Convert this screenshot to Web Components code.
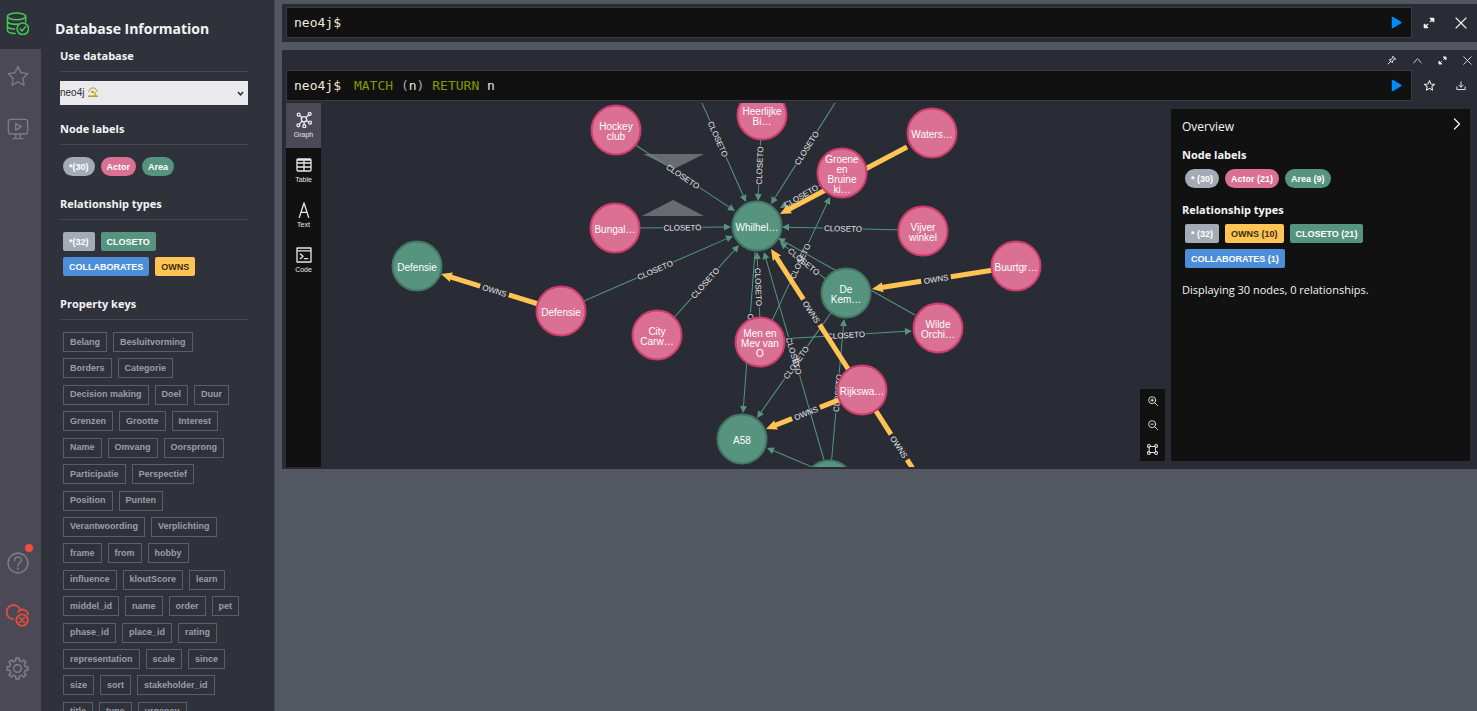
<!DOCTYPE html>
<html lang="en">
<head>
<meta charset="utf-8">
<title>neo4j browser</title>
<style>
  body {
    margin: 0;
    height: 100vh;
    overflow: hidden;
    background: #535762;
    color: #f4f4f6;
    font-family: "Open Sans", "Noto Sans", sans-serif;
    font-size: 11px;
    --color-rail: #4b4955;
    --color-drawer: #30323b;
    --color-frame: #292c34;
    --color-dark: #111111;
    --font-ui: "Liberation Sans", Arial, sans-serif;
    --font-mono: "DejaVu Sans Mono", "Liberation Mono", monospace;
  }
</style>
</head>
<body>
<browser-app>
  <side-rail slot="rail"></side-rail>

  <info-drawer slot="drawer" heading="Database Information">
    <drawer-section heading="Use database">
      <database-select></database-select>
    </drawer-section>
    <drawer-section heading="Node labels">
      <chip-list>
        <label-chip round>*(30)</label-chip>
        <label-chip round color="pink">Actor</label-chip>
        <label-chip round color="green">Area</label-chip>
      </chip-list>
    </drawer-section>
    <drawer-section heading="Relationship types">
      <chip-list>
        <label-chip>*(32)</label-chip>
        <label-chip color="green">CLOSETO</label-chip>
        <label-chip color="blue">COLLABORATES</label-chip>
        <label-chip color="orange">OWNS</label-chip>
      </chip-list>
    </drawer-section>
    <drawer-section heading="Property keys">
      <property-keys></property-keys>
    </drawer-section>
  </info-drawer>

  <query-frame>
    <query-editor slot="editor" editable></query-editor>
    <icon-button slot="actions" icon="expand" label="Fullscreen" size="12"></icon-button>
    <icon-button slot="actions" icon="close" label="Close" size="12"></icon-button>
  </query-frame>

  <query-frame>
    <icon-button slot="header" icon="pin" label="Pin" size="10"></icon-button>
    <icon-button slot="header" icon="up" label="Collapse" size="9"></icon-button>
    <icon-button slot="header" icon="expand" label="Fullscreen" size="9"></icon-button>
    <icon-button slot="header" icon="close" label="Close" size="9"></icon-button>
    <query-editor slot="editor" query="MATCH (n) RETURN n"></query-editor>
    <icon-button slot="actions" icon="star" label="Favorite" size="11"></icon-button>
    <icon-button slot="actions" icon="download" label="Export" size="10"></icon-button>
    <result-view slot="result">
      <view-switch slot="views"></view-switch>
      <graph-canvas></graph-canvas>
      <overview-panel slot="panel" heading="Overview">
        <overview-group heading="Node labels">
          <label-chip round>* (30)</label-chip>
          <label-chip round color="pink">Actor (21)</label-chip>
          <label-chip round color="green">Area (9)</label-chip>
        </overview-group>
        <overview-group heading="Relationship types">
          <label-chip>* (32)</label-chip>
          <label-chip color="orange">OWNS (10)</label-chip>
          <label-chip color="green">CLOSETO (21)</label-chip>
          <label-chip color="blue">COLLABORATES (1)</label-chip>
        </overview-group>
        <span slot="summary">Displaying 30 nodes, 0 relationships.</span>
      </overview-panel>
    </result-view>
  </query-frame>
</browser-app>

<script>
// Eight-toothed cog outline in a 24x24 box
function gearPath() {
  const points = [];
  for (let i = 0; i < 8; i++) {
    const base = i * 45;
    [[-13, 8.4], [-9, 11], [9, 11], [13, 8.4]].forEach(([offset, radius]) => {
      const a = (base + offset) * Math.PI / 180;
      points.push(`${(12 + radius * Math.sin(a)).toFixed(2)} ${(12 - radius * Math.cos(a)).toFixed(2)}`);
    });
  }
  return `M${points.join('L')}z`;
}

// 24x24 line icons
const ICONS = {
  database: `<ellipse cx="11" cy="4.5" rx="9.5" ry="3.5"/><path d="M1.500 4.500v14.500c0 1.800 3.500 3.200 8 3.400M20.500 4.500v6M1.500 9.500c0 1.900 3.700 3.300 8.500 3.400 1.400 0 2-.100 3-.300M1.500 14.500c0 1.700 3.300 3 7.500 3.300"/><circle cx="17.500" cy="17.500" r="6"/><path d="M14.800 17.700l2 2 3.500-4.200"/>`,
  star: `<path d="M12 1.500l3.200 7 7.500.900-5.500 5.200 1.400 7.500L12 18.400l-6.600 3.700 1.400-7.500L1.300 9.400l7.500-.900z"/>`,
  guide: `<path d="M4 1.500h16a2.500 2.500 0 0 1 2.500 2.500v11a2.500 2.500 0 0 1-2.500 2.500H4A2.500 2.500 0 0 1 1.500 15V4A2.500 2.500 0 0 1 4 1.500zM9.500 5.800v7.400l6-3.700zM9.500 17.500V22M14.500 17.500V22M6.500 22.500h11"/>`,
  help: `<circle cx="12" cy="12" r="10.800"/><path d="M8.300 9.300c0-2.300 1.600-3.800 3.800-3.800s3.700 1.400 3.700 3.400c0 3-3.800 2.900-3.800 6"/><path d="M12 17.600v1.200"/>`,
  cloud: `<path d="M7.500 15.700A7.200 7.200 0 1 1 14.600 5.800M12.800 8.200c2-3.800 8.800-3.200 10.200 2.600"/><circle cx="16.800" cy="16.800" r="6"/><path d="M14.400 14.400l4.800 4.800M19.200 14.400l-4.800 4.800"/>`,
  gear: `<path d="${gearPath()}"/><circle cx="12" cy="12" r="4"/>`,
  expand: `<path d="M14.500 9.500l5-5M9.500 14.500l-5 5"/><path d="M14.500 2.500h7v7zM9.500 21.500h-7v-7z" fill="currentColor"/>`,
  close: `<path d="M2 2l20 20M22 2L2 22"/>`,
  up: `<path d="M2 18c4-2 6-8 10-11 4 3 6 9 10 11"/>`,
  pin: `<path d="M13.500 3l7.500 7.500M14.800 4.500L11 10l-5.500 1.500 7 7L14 13l5.500-3.800M9 15l-6.500 6.500"/>`,
  download: `<path d="M12 2v12M7 10l5 5 5-5M2 14v6.500h20V14"/>`,
  graph: `<circle cx="12" cy="11" r="4"/><circle cx="4" cy="4" r="2.200"/><circle cx="20.500" cy="3" r="2.200"/><circle cx="3.500" cy="20" r="2.200"/><circle cx="12.500" cy="21.200" r="2.200"/><circle cx="21" cy="16" r="2.200"/><path d="M5.700 5.500L9 8.300M18.800 4.600L15 8.200M5 18.200L9 14M12.200 15v4M19 15l-3.500-2"/>`,
  table: `<path d="M3 3h18a1.500 1.500 0 0 1 1.500 1.500v15A1.500 1.500 0 0 1 21 21H3a1.500 1.500 0 0 1-1.500-1.500v-15A1.500 1.500 0 0 1 3 3zM1.500 9h21M1.500 15h21M12 3v18M1.500 4.500h21"/>`,
  text: `<path d="M5 23L12 1.500 19 23M7.500 15.500h9"/>`,
  code: `<path d="M1.500 1.500h21v21h-21zM1.500 5.800h21M6.500 10.500l4 3.500-4 3.500M12.500 17.500h5"/>`,
  zoomIn: `<circle cx="10" cy="10" r="8.500"/><path d="M16.200 16.200L23 23M10 6.500v7M6.500 10h7"/>`,
  zoomOut: `<circle cx="10" cy="10" r="8.500"/><path d="M16.200 16.200L23 23M7 10h6"/>`,
  fit: `<path d="M5.500 5.500h13v13h-13zM1.500 6.500v-5h5l1.500 4M22.500 6.500v-5h-5l-1.500 4M1.500 17.500v5h5l1.500-4M22.500 17.500v5h-5l-1.500-4M1.500 6.500L5 8M22.500 6.500L19 8M1.500 17.500L5 16M22.500 17.500L19 16"/>`,
  right: `<path d="M7 2l10 10L7 22"/>`
};

function icon(name, size, stroke = 2) {
  return `<svg width="${size}" height="${size}" viewBox="0 0 24 24" fill="none" stroke="currentColor"
    stroke-width="${stroke}" stroke-linecap="round" stroke-linejoin="round" aria-hidden="true">${ICONS[name]}</svg>`;
}

const BUTTON_RESET = `
  button {
    margin: 0;
    padding: 0;
    border: 0;
    background: none;
    color: inherit;
    font: inherit;
    cursor: pointer;
  }
  svg { display: block; }
`;

class BaseElement extends HTMLElement {
  constructor() {
    super();
    this.attachShadow({ mode: 'open' });
  }

  connectedCallback() {
    this.shadowRoot.innerHTML = this.render();
  }
}

class BrowserApp extends BaseElement {
  render() {
    return `
      <style>
        :host { display: flex; height: 100vh; }
        main {
          flex: 1;
          min-width: 0;
          display: flex;
          flex-direction: column;
          gap: 8px;
          padding: 4px 0 0 7px;
        }
      </style>
      <slot name="rail"></slot>
      <slot name="drawer"></slot>
      <main><slot></slot></main>
    `;
  }
}

class SideRail extends BaseElement {
  render() {
    return `
      <style>
        ${BUTTON_RESET}
        :host {
          display: flex;
          flex-shrink: 0;
          width: 41px;
          background: var(--color-rail);
          color: #7d7b84;
        }
        nav {
          flex: 1;
          display: flex;
          flex-direction: column;
          padding-bottom: 16px;
        }
        button {
          display: grid;
          place-items: center;
          height: 53px;
          padding-right: 6px;
          position: relative;
        }
        .active {
          height: 49px;
          padding-bottom: 3px;
          box-sizing: border-box;
          background: var(--color-drawer);
          color: #43c854;
        }
        .spacer { flex: 1; }
        .error { color: #e54d3c; }
        .dot {
          position: absolute;
          top: 8px;
          right: 8px;
          width: 8px;
          height: 8px;
          border-radius: 50%;
          background: #f0503c;
        }
      </style>
      <nav>
        <button class="active" aria-label="Database">${icon('database', 23, 1.6)}</button>
        <button aria-label="Favorites">${icon('star', 22, 1.5)}</button>
        <button aria-label="Guides">${icon('guide', 22, 1.5)}</button>
        <div class="spacer"></div>
        <button aria-label="Help">${icon('help', 22, 1.7)}<span class="dot"></span></button>
        <button class="error" aria-label="Connection">${icon('cloud', 23, 1.9)}</button>
        <button aria-label="Settings">${icon('gear', 23, 1.7)}</button>
      </nav>
    `;
  }
}

class InfoDrawer extends BaseElement {
  render() {
    return `
      <style>
        :host {
          display: block;
          flex-shrink: 0;
          box-sizing: border-box;
          width: 234px;
          padding: 18px 26px 0 19px;
          border-right: 1px solid #42454f;
          background: var(--color-drawer);
          overflow: hidden;
        }
        h1 {
          margin: 0 0 7px -5px;
          font-size: 14px;
          line-height: 22px;
          font-weight: 700;
          white-space: nowrap;
        }
      </style>
      <h1>${this.getAttribute('heading')}</h1>
      <slot></slot>
    `;
  }
}

class DrawerSection extends BaseElement {
  render() {
    return `
      <style>
        :host { display: block; }
        h2 {
          margin: 0;
          padding-bottom: 6px;
          border-bottom: 1px solid #454852;
          font-size: 11px;
          line-height: 18px;
          font-weight: 700;
        }
      </style>
      <h2>${this.getAttribute('heading')}</h2>
      <slot></slot>
    `;
  }
}

class DatabaseSelect extends BaseElement {
  render() {
    return `
      <style>
        :host { display: block; padding: 9px 0 15px; }
        .box { position: relative; }
        select {
          display: block;
          width: 100%;
          height: 24px;
          padding: 0;
          border: 0;
          border-radius: 0;
          appearance: none;
          background: #e9e9ee;
          color: #2b2c33;
          font: 10px/24px var(--font-ui);
        }
        svg { position: absolute; pointer-events: none; }
        .home { left: 28px; top: 6px; }
        .arrow { right: 4px; top: 9px; }
      </style>
      <div class="box">
        <select aria-label="Use database"><option>neo4j</option><option>system</option></select>
        <svg class="home" width="10" height="10" viewBox="0 0 10 10">
          <path d="M1 4.500L5 .800 9 4.500V9H1z" fill="#f4ecc4"/>
          <path d="M.500 5L3 1h4l2.500 4" fill="none" stroke="#a89a68"/>
          <rect x="3.500" y="4" width="2" height="2" fill="#7b8794"/>
          <rect x="6" y="5" width="2" height="4" fill="#d8b94a"/>
          <path d="M0 9.200h10" stroke="#b39a3c" stroke-width="1.500"/>
        </svg>
        <svg class="arrow" width="7" height="7" viewBox="0 0 7 7">
          <path d="M1 2l2.500 3L6 2" fill="none" stroke="#222" stroke-width="1.400"/>
        </svg>
      </div>
    `;
  }
}

class ChipList extends BaseElement {
  render() {
    return `
      <style>
        :host {
          display: flex;
          flex-wrap: wrap;
          gap: 6px;
          padding: 12px 8px 19px 3px;
        }
      </style>
      <slot></slot>
    `;
  }
}

class LabelChip extends BaseElement {
  render() {
    return `
      <style>
        ${BUTTON_RESET}
        :host { display: block; }
        button {
          display: block;
          height: 19px;
          padding: 0 6px;
          border-radius: 2px;
          background: #a5abb6;
          color: #fff;
          font: bold 9px/18px var(--font-ui);
          white-space: nowrap;
        }
        :host([round]) button { border-radius: 10px; }
        :host([color="pink"]) button { background: #da7194; }
        :host([color="green"]) button { background: #569480; }
        :host([color="blue"]) button { background: #4c8eda; }
        :host([color="orange"]) button { background: #ffc454; color: #3a2d10; }
      </style>
      <button><slot></slot></button>
    `;
  }
}

const PROPERTY_KEYS = [
  'Belang', 'Besluitvorming', 'Borders', 'Categorie', 'Decision making', 'Doel', 'Duur',
  'Grenzen', 'Grootte', 'Interest', 'Name', 'Omvang', 'Oorsprong', 'Participatie',
  'Perspectief', 'Position', 'Punten', 'Verantwoording', 'Verplichting', 'frame', 'from',
  'hobby', 'influence', 'kloutScore', 'learn', 'middel_id', 'name', 'order', 'pet',
  'phase_id', 'place_id', 'rating', 'representation', 'scale', 'since', 'size', 'sort',
  'stakeholder_id', 'title', 'type', 'urgency'
];

class PropertyKeys extends BaseElement {
  render() {
    return `
      <style>
        ${BUTTON_RESET}
        :host { display: block; padding: 12px 8px 19px 3px; }
        .keys {
          display: flex;
          flex-wrap: wrap;
          align-content: space-between;
          column-gap: 6px;
          min-height: 390px;
        }
        button {
          box-sizing: border-box;
          height: 20px;
          padding: 0 6px;
          border: 1px solid #5b5e68;
          color: #9c9ea6;
          font: bold 9px/17px var(--font-ui);
          white-space: nowrap;
        }
      </style>
      <div class="keys">${PROPERTY_KEYS.map((key) => `<button>${key}</button>`).join('')}</div>
    `;
  }
}

class QueryFrame extends BaseElement {
  connectedCallback() {
    super.connectedCallback();
    // Frames without header buttons or results collapse to the editor row
    for (const name of ['header', 'result']) {
      const used = this.querySelector(`[slot="${name}"]`);
      this.shadowRoot.querySelector(`.${name}`).hidden = !used;
    }
    if (this.querySelector('[slot="header"]')) this.shadowRoot.querySelector('section').classList.add('full');
  }

  render() {
    return `
      <style>
        :host { display: block; background: var(--color-frame); }
        [hidden] { display: none !important; }
        section { padding: 3px 0 4px 4px; }
        section.full { padding: 0 0 2px 4px; }
        .header {
          display: flex;
          justify-content: flex-end;
          gap: 5px;
          height: 20px;
        }
        .header ::slotted(icon-button) { width: 20px; }
        .row { display: flex; }
        .row slot[name="editor"]::slotted(*) { flex: 1; min-width: 0; }
        .actions { display: flex; padding-left: 1px; }
        .actions ::slotted(icon-button) { width: 32px; }
        .result { padding-top: 2px; }
      </style>
      <section>
        <div class="header"><slot name="header"></slot></div>
        <div class="row">
          <slot name="editor"></slot>
          <div class="actions"><slot name="actions"></slot></div>
        </div>
        <div class="result"><slot name="result"></slot></div>
      </section>
    `;
  }
}

class IconButton extends BaseElement {
  render() {
    const size = Number(this.getAttribute('size'));
    return `
      <style>
        ${BUTTON_RESET}
        :host { display: grid; }
        button { display: grid; place-items: center; }
      </style>
      <button aria-label="${this.getAttribute('label')}">${icon(this.getAttribute('icon'), size, 2.2)}</button>
    `;
  }
}

class QueryEditor extends BaseElement {
  highlight(query) {
    return query
      .replace(/\b(MATCH|RETURN)\b/g, '<b>$1</b>')
      .replace(/[()]/g, '<i>$&</i>');
  }

  render() {
    const body = this.hasAttribute('editable')
      ? '<input aria-label="Cypher query" spellcheck="false">'
      : `<code>${this.highlight(this.getAttribute('query'))}</code>`;
    return `
      <style>
        ${BUTTON_RESET}
        :host {
          display: flex;
          align-items: center;
          gap: 13px;
          box-sizing: border-box;
          height: 31px;
          padding: 0 9px 0 7px;
          border: 1px solid #383b43;
          background: var(--color-dark);
          font: 13px/19px var(--font-mono);
        }
        .prompt { color: #efe9d8; }
        input, code {
          flex: 1;
          min-width: 0;
          padding: 0;
          border: 0;
          outline: 0;
          background: none;
          color: #dfe3e4;
          font: inherit;
        }
        b { font-weight: 400; color: #859900; }
        i { font-style: normal; color: #a3abb4; }
        button { color: #018bff; }
      </style>
      <span class="prompt">neo4j$</span>
      ${body}
      <button aria-label="Run">
        <svg width="11" height="13" viewBox="0 0 11 13">
          <path d="M1.500 1.500L9.800 6.500 1.500 11.500z" fill="currentColor" stroke="currentColor" stroke-width="1.500" stroke-linejoin="round"/>
        </svg>
      </button>
    `;
  }
}

class ResultView extends BaseElement {
  render() {
    return `
      <style>
        :host { display: flex; min-height: 364px; }
        .graph { flex: 1; min-width: 0; display: grid; }
      </style>
      <slot name="views"></slot>
      <div class="graph"><slot></slot></div>
      <slot name="panel"></slot>
    `;
  }
}

class ViewSwitch extends BaseElement {
  render() {
    const views = [['graph', 'Graph'], ['table', 'Table'], ['text', 'Text'], ['code', 'Code']];
    return `
      <style>
        ${BUTTON_RESET}
        :host {
          display: flex;
          flex-direction: column;
          flex-shrink: 0;
          width: 35px;
          background: var(--color-dark);
          color: #e6e6ea;
        }
        button {
          display: flex;
          flex-direction: column;
          align-items: center;
          justify-content: center;
          gap: 2px;
          height: 45px;
          font: 7px/10px var(--font-ui);
        }
        button.active { background: var(--color-rail); }
      </style>
      ${views.map(([name, label], i) => `
        <button class="${i === 0 ? 'active' : ''}">${icon(name, 16, 2)}<span>${label}</span></button>
      `).join('')}
    `;
  }
}

const NODES = [
  [295, 27, 'pink', 'Hockey', 'club'],
  [441, 12, 'pink', 'Heerlijke', 'Bi…'],
  [611, 30, 'pink', 'Waters…'],
  [521, 70, 'pink', 'Groene', 'en', 'Bruine', 'ki…'],
  [294, 125, 'pink', 'Bungal…'],
  [436, 123, 'green', 'Whilhel…'],
  [602, 128, 'pink', 'Vijver', 'winkel'],
  [96, 163, 'green', 'Defensie'],
  [240, 208, 'pink', 'Defensie'],
  [695, 163, 'pink', 'Buurtgr…'],
  [525, 190, 'green', 'De', 'Kem…'],
  [617, 225, 'pink', 'Wilde', 'Orchi…'],
  [336, 232, 'pink', 'City', 'Carw…'],
  [439, 239, 'pink', 'Men en', 'Mev van', 'O'],
  [541, 287, 'pink', 'Rijkswa…'],
  [421, 336, 'green', 'A58'],
  [508, 382, 'green']
];

// x1, y1, x2, y2 (arrow tip), type, caption
const EDGES = [
  [310, 39, 414, 108, 'closeto', 'CLOSETO'],
  [369, -27, 425, 99, 'closeto', 'CLOSETO'],
  [440, 27, 437, 98, 'closeto', 'CLOSETO'],
  [521, -11, 450, 101, 'closeto', 'CLOSETO'],
  [501, 81, 459, 105, 'closeto', 'CLOSETO'],
  [313, 125, 410, 124, 'closeto', 'CLOSETO'],
  [583, 127, 461, 124, 'closeto', 'CLOSETO'],
  [256, 201, 412, 133, 'closeto', 'CLOSETO'],
  [350, 218, 418, 142, 'closeto', 'CLOSETO'],
  [434, 149, 422, 310, 'closeto', 'CLOSETO'],
  [439, 219, 436, 149, 'closeto', 'CLOSETO'],
  [503, 357, 443, 149, 'closeto', 'CLOSETO'],
  [510, 364, 523, 216, 'closeto', 'CLOSETO'],
  [514, 204, 436, 315, 'closeto', 'CLOSETO'],
  [491, 364, 446, 345, 'closeto', ''],
  [459, 236, 591, 228, 'closeto', 'CLOSETO'],
  [594, 212, 457, 135, 'closeto', ''],
  [507, 178, 459, 139, 'closeto', 'CLOSETO'],
  [449, 222, 509, 94, 'closeto', 'CLOSETO'],
  [586, 44, 459, 111, 'owns', 'OWNS'],
  [531, 272, 450, 146, 'owns', 'OWNS'],
  [525, 294, 445, 326, 'owns', 'OWNS'],
  [555, 308, 601, 380, 'owns', 'OWNS'],
  [227, 204, 120, 171, 'owns', 'OWNS'],
  [679, 166, 551, 186, 'owns', 'OWNS']
];

class GraphCanvas extends BaseElement {
  drawEdge([x1, y1, x2, y2, type, caption]) {
    const owns = type === 'owns';
    const length = Math.hypot(x2 - x1, y2 - y1);
    const angle = Math.atan2(y2 - y1, x2 - x1) * 180 / Math.PI;
    const flip = Math.abs(angle) > 90 ? 180 : 0;
    const head = owns ? 8 : 6;
    const half = caption ? (owns ? 15 : 20) : 0;
    const mid = length / 2;
    const shaft = caption
      ? `M0 0H${Math.max(mid - half, 0)}M${mid + half} 0H${Math.max(length - head, mid + half)}`
      : `M0 0H${length - head}`;
    const tip = owns
      ? `M${length} 0l-11 -5l1 5l-1 5z`
      : `M${length} 0l-7 -3.500v7z`;
    return `
      <g transform="translate(${x1} ${y1}) rotate(${angle})" class="${type}">
        <path class="shaft" d="${shaft}"/>
        <path class="tip" d="${tip}"/>
        ${caption && `<text transform="translate(${mid} 0) rotate(${flip})" y="3">${caption}</text>`}
      </g>
    `;
  }

  drawNode([x, y, color, ...lines]) {
    const first = y + 5 - (lines.length - 1) * 5;
    return `
      <g class="node ${color}">
        <circle cx="${x}" cy="${y}" r="24.500"/>
        ${lines.map((line, i) => `<text x="${x}" y="${first + i * 10}">${line}</text>`).join('')}
      </g>
    `;
  }

  render() {
    return `
      <style>
        ${BUTTON_RESET}
        :host { display: grid; position: relative; }
        .graph {
          width: 100%;
          height: 100%;
          overflow: hidden;
        }
        text {
          fill: #fff;
          font: 10px var(--font-ui);
          text-anchor: middle;
        }
        .closeto text, .owns text { font-size: 8px; fill: #e8e8ea; }
        .shaft { fill: none; }
        .closeto .shaft { stroke: #569480; stroke-width: 1; }
        .closeto .tip { fill: #569480; }
        .owns .shaft { stroke: #ffc454; stroke-width: 5; }
        .owns .tip { fill: #ffc454; }
        .marker { fill: #6a6b70; }
        circle { stroke-width: 2; }
        .pink circle { fill: #da7194; stroke: #cc3c6c; }
        .green circle { fill: #569480; stroke: #447666; }
        .zoom {
          position: absolute;
          right: 0;
          bottom: 6px;
          display: flex;
          flex-direction: column;
          width: 25px;
          background: var(--color-dark);
        }
        .zoom button {
          display: grid;
          place-items: center;
          height: 24px;
        }
      </style>
      <svg class="graph" role="img" aria-label="Query result graph">
        <path class="marker" d="M322 51H383L353 66zM321 113H383L352 97z"/>
        ${EDGES.map((edge) => this.drawEdge(edge)).join('')}
        ${NODES.map((node) => this.drawNode(node)).join('')}
      </svg>
      <div class="zoom">
        <button aria-label="Zoom in">${icon('zoomIn', 10, 2)}</button>
        <button aria-label="Zoom out">${icon('zoomOut', 10, 2)}</button>
        <button aria-label="Zoom to fit">${icon('fit', 11, 2)}</button>
      </div>
    `;
  }
}

class OverviewPanel extends BaseElement {
  render() {
    return `
      <style>
        ${BUTTON_RESET}
        :host {
          display: block;
          flex-shrink: 0;
          box-sizing: border-box;
          width: 299px;
          margin: 6px 7px 6px 6px;
          padding: 9px 6px 9px 11px;
          background: var(--color-dark);
        }
        header {
          display: flex;
          justify-content: space-between;
          align-items: flex-start;
          margin-bottom: 10px;
        }
        header button { padding: 0 1px; }
        h2, p {
          margin: 0;
          font-size: 11px;
          line-height: 18px;
          font-weight: 400;
        }
        h2 { font-size: 12px; }
      </style>
      <header>
        <h2>${this.getAttribute('heading')}</h2>
        <button aria-label="Collapse panel">${icon('right', 12, 2.5)}</button>
      </header>
      <slot></slot>
      <p><slot name="summary"></slot></p>
    `;
  }
}

class OverviewGroup extends BaseElement {
  render() {
    return `
      <style>
        :host { display: block; margin-bottom: 13px; }
        h3 {
          margin: 0 0 5px;
          font-size: 11px;
          line-height: 18px;
          font-weight: 700;
        }
        .chips {
          display: flex;
          flex-wrap: wrap;
          gap: 6px;
          max-width: 200px;
          padding-left: 3px;
        }
      </style>
      <h3>${this.getAttribute('heading')}</h3>
      <div class="chips"><slot></slot></div>
    `;
  }
}

customElements.define('browser-app', BrowserApp);
customElements.define('side-rail', SideRail);
customElements.define('info-drawer', InfoDrawer);
customElements.define('drawer-section', DrawerSection);
customElements.define('database-select', DatabaseSelect);
customElements.define('chip-list', ChipList);
customElements.define('label-chip', LabelChip);
customElements.define('property-keys', PropertyKeys);
customElements.define('query-frame', QueryFrame);
customElements.define('icon-button', IconButton);
customElements.define('query-editor', QueryEditor);
customElements.define('result-view', ResultView);
customElements.define('view-switch', ViewSwitch);
customElements.define('graph-canvas', GraphCanvas);
customElements.define('overview-panel', OverviewPanel);
customElements.define('overview-group', OverviewGroup);
</script>
</body>
</html>
